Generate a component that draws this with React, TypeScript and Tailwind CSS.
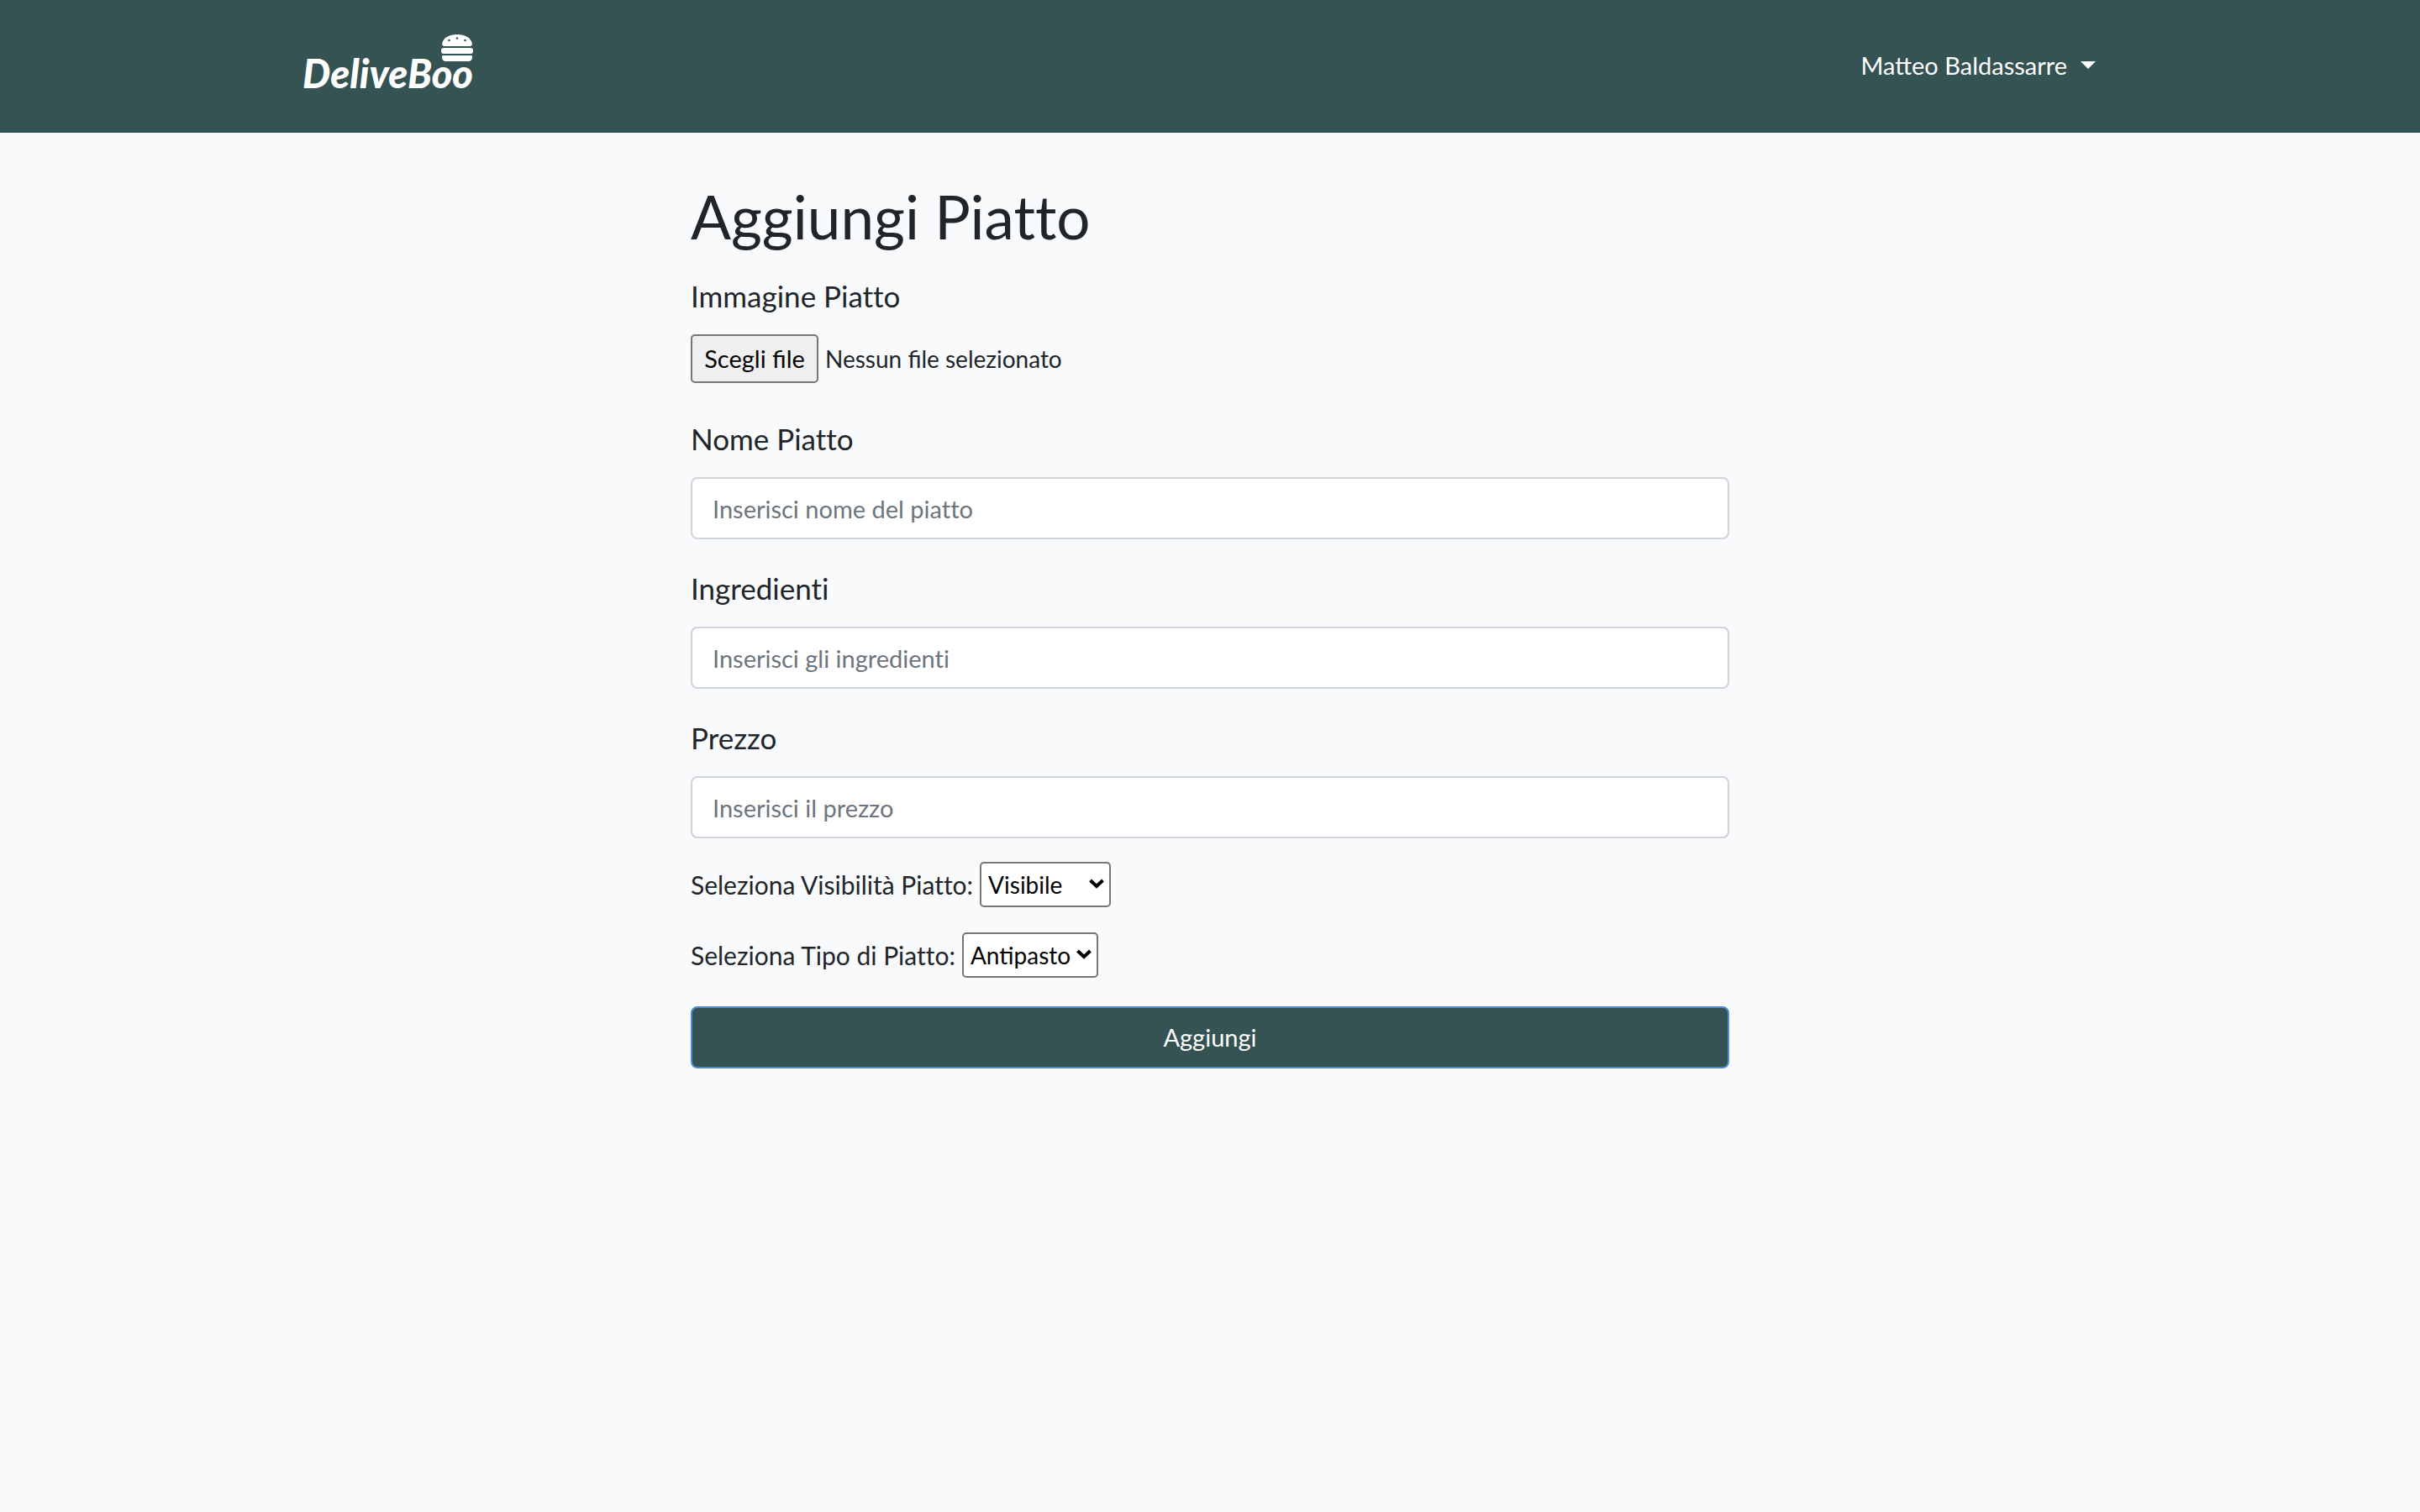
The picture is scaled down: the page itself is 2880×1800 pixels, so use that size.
import { useRef, useState } from 'react';

function BurgerIcon() {
  return (
    <svg viewBox="0 0 38 32" className="h-8 w-[38px]" aria-hidden="true">
      <path
        fill="#fff"
        d="M4 14C2 14 1 12.600 1.200 10.800C2 4.500 9.500 0 19 0S36 4.500 36.800 10.800C37 12.600 36 14 34 14Z"
      />
      <rect x="0" y="16" width="38" height="7" rx="3" fill="#fff" />
      <path fill="#fff" d="M2 25H36Q37 25 37 26V27C37 30 35 32 32 32H6C3 32 1 30 1 27V26Q1 25 2 25Z" />
      <g fill="#355352">
        <circle cx="9.500" cy="7" r="1.300" />
        <circle cx="19" cy="4.500" r="1.300" />
        <circle cx="28.500" cy="7" r="1.300" />
      </g>
    </svg>
  );
}

function Header() {
  return (
    <header className="border-b border-[#2f4c4b] bg-[#355352] text-white">
      <div className="mx-auto flex h-[157px] max-w-[2220px] items-center justify-between px-[30px]">
        <a href="#" className="flex flex-col pb-1.5">
          <span className="self-end">
            <BurgerIcon />
          </span>
          <span className="-mt-2.5 text-[47px] leading-[48px] font-black italic">DeliveBoo</span>
        </a>
        <button type="button" className="flex items-center gap-4 px-[26px] pb-0.5 text-[29px] leading-[44px]">
          Matteo Baldassarre
          <svg viewBox="0 0 18 9" className="h-[9px] w-[18px]" aria-hidden="true">
            <path d="M0 0H18L9 9Z" fill="#fff" />
          </svg>
        </button>
      </div>
    </header>
  );
}

const labelClass = 'text-[35px] leading-[44px] [font-variant-ligatures:none]';

function FileField() {
  const input = useRef<HTMLInputElement>(null);
  const [name, setName] = useState('');
  return (
    <div className="flex flex-col items-start gap-6 pb-2">
      <label htmlFor="image" className={labelClass}>
        Immagine Piatto
      </label>
      <div className="relative flex items-center gap-2 text-[28px]">
        <input
          ref={input}
          id="image"
          type="file"
          tabIndex={-1}
          className="sr-only"
          onChange={(e) => setName(e.target.files?.[0]?.name ?? '')}
        />
        <button
          type="button"
          onClick={() => input.current?.click()}
          className="h-[58px] w-[152px] rounded-[5px] border-2 border-[#767676] bg-[#efefef] text-[29px] text-black"
        >
          Scegli file
        </button>
        <span>{name || 'Nessun file selezionato'}</span>
      </div>
    </div>
  );
}

function TextField({ id, label, placeholder }: { id: string; label: string; placeholder: string }) {
  return (
    <div className="flex flex-col items-start gap-6">
      <label htmlFor={id} className={labelClass}>
        {label}
      </label>
      <input
        id={id}
        type="text"
        placeholder={placeholder}
        className="h-[74px] w-full rounded-lg border-2 border-[#ced4da] bg-white px-6 text-[29px] [font-variant-ligatures:none] placeholder:text-[#6c757d]"
      />
    </div>
  );
}

function SelectField({ id, label, options }: { id: string; label: string; options: string[] }) {
  return (
    <div className="flex items-center gap-2">
      <label htmlFor={id} className="text-[30px] [font-variant-ligatures:none]">
        {label}
      </label>
      <div className="relative">
        <select
          id={id}
          className="h-[54px] min-w-[156px] appearance-none rounded-[5px] border-2 border-[#767676] bg-white pr-[30px] pl-2 text-[28px] text-black"
        >
          {options.map((o) => (
            <option key={o}>{o}</option>
          ))}
        </select>
        <svg
          viewBox="0 0 18 12"
          className="pointer-events-none absolute top-5 right-2 h-3 w-[18px]"
          aria-hidden="true"
        >
          <path d="M1.500 2L9 9L16.500 2" fill="none" stroke="#000" strokeWidth="4" />
        </svg>
      </div>
    </div>
  );
}

export default function App() {
  return (
    <div className="min-h-screen bg-[#f8fafc] font-[Lato,sans-serif] text-[#212529]">
      <Header />
      <main className="mx-auto max-w-[1236px] pt-14">
        <h1 className="mb-7 text-[71px] leading-[88px] [font-variant-ligatures:none]">Aggiungi Piatto</h1>
        <form className="flex flex-col" onSubmit={(e) => e.preventDefault()}>
          <div className="flex flex-col gap-9">
            <FileField />
            <TextField id="name" label="Nome Piatto" placeholder="Inserisci nome del piatto" />
            <TextField id="ingredients" label="Ingredienti" placeholder="Inserisci gli ingredienti" />
            <TextField id="price" label="Prezzo" placeholder="Inserisci il prezzo" />
          </div>
          <div className="mt-7 mb-[34px] flex flex-col gap-[30px]">
            <SelectField id="visibility" label="Seleziona Visibilità Piatto:" options={['Visibile', 'Nascosto']} />
            <SelectField
              id="type"
              label="Seleziona Tipo di Piatto:"
              options={['Antipasto', 'Primo', 'Secondo', 'Dolce']}
            />
          </div>
          <button
            type="submit"
            className="h-[74px] w-full rounded-lg border-2 border-[#4a8dd8] bg-[#355352] text-[29px] text-white"
          >
            Aggiungi
          </button>
        </form>
      </main>
    </div>
  );
}
